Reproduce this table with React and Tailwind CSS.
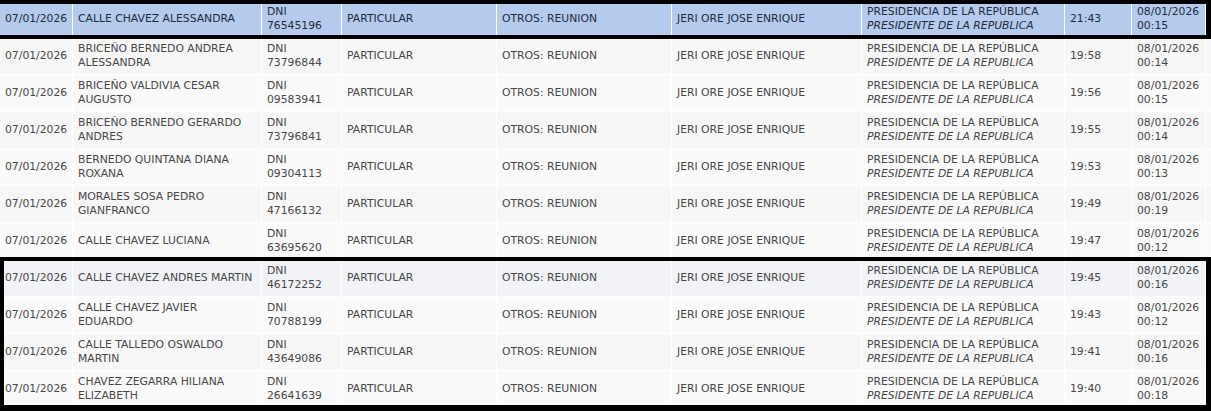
import React from "react";

const rows = [
  { name: ["CALLE CHAVEZ ALESSANDRA"], dni: "76545196", t: "21:43", out: "00:15" },
  { name: ["BRICEÑO BERNEDO ANDREA", "ALESSANDRA"], dni: "73796844", t: "19:58", out: "00:14" },
  { name: ["BRICEÑO VALDIVIA CESAR", "AUGUSTO"], dni: "09583941", t: "19:56", out: "00:15" },
  { name: ["BRICEÑO BERNEDO GERARDO", "ANDRES"], dni: "73796841", t: "19:55", out: "00:14" },
  { name: ["BERNEDO QUINTANA DIANA", "ROXANA"], dni: "09304113", t: "19:53", out: "00:13" },
  { name: ["MORALES SOSA PEDRO", "GIANFRANCO"], dni: "47166132", t: "19:49", out: "00:19" },
  { name: ["CALLE CHAVEZ LUCIANA"], dni: "63695620", t: "19:47", out: "00:12" },
  { name: ["CALLE CHAVEZ ANDRES MARTIN"], dni: "46172252", t: "19:45", out: "00:16" },
  { name: ["CALLE CHAVEZ JAVIER", "EDUARDO"], dni: "70788199", t: "19:43", out: "00:12" },
  { name: ["CALLE TALLEDO OSWALDO", "MARTIN"], dni: "43649086", t: "19:41", out: "00:16" },
  { name: ["CHAVEZ ZEGARRA HILIANA", "ELIZABETH"], dni: "26641639", t: "19:40", out: "00:18" },
];

function Cell({ children, className = "" }) {
  return (
    <div className={"flex flex-col justify-center border-r border-white pl-[5px] pr-[3px] overflow-hidden whitespace-nowrap " + className}>
      {children}
    </div>
  );
}

function Row({ r, bg, text }) {
  return (
    <div
      className={
        "grid grid-cols-[73px_189px_80px_155px_175px_190px_203px_67px_74px] h-[37px] border-b border-white " +
        bg +
        " " +
        text
      }
    >
      <Cell className="pl-[4px]">07/01/2026</Cell>
      <Cell>
        {r.name.map((l, i) => (
          <span key={i}>{l}</span>
        ))}
      </Cell>
      <Cell>
        <span>DNI</span>
        <span>{r.dni}</span>
      </Cell>
      <Cell>PARTICULAR</Cell>
      <Cell>OTROS: REUNION</Cell>
      <Cell>JERI ORE JOSE ENRIQUE</Cell>
      <Cell>
        <span>PRESIDENCIA DE LA REPÚBLICA</span>
        <span className="italic">PRESIDENTE DE LA REPUBLICA</span>
      </Cell>
      <Cell>{r.t}</Cell>
      <Cell>
        <span>08/01/2026</span>
        <span>{r.out}</span>
      </Cell>
    </div>
  );
}

export default function App() {
  const rowBg = (i) => (i === 7 ? "bg-[#f1f3f7]" : i % 2 === 1 ? "bg-[#f7f7f7]" : "bg-[#fafafa]");
  return (
    <div
      className="w-[1211px] h-[411px] overflow-hidden bg-white text-[10.8px] leading-[14px] pt-[1px]"
      style={{ fontFamily: '"DejaVu Sans", Verdana, sans-serif' }}
    >
      <div className="relative">
        <Row r={rows[0]} bg="bg-[#b4cbee]" text="text-[#1f2a3a]" />
        <div className="absolute top-[-1px] bottom-[-1px] left-[-4px] right-0 border-4 border-black border-r-[5px] pointer-events-none" />
      </div>
      {rows.slice(1, 7).map((r, i) => (
        <Row key={i} r={r} bg={rowBg(i + 1)} text="text-[#474747]" />
      ))}
      <div className="relative">
        {rows.slice(7).map((r, i) => (
          <Row key={i} r={r} bg={rowBg(i + 7)} text="text-[#474747]" />
        ))}
        <div className="absolute top-[-3px] bottom-[-3px] left-0 right-0 border-t-4 border-l-4 border-r-[5px] border-b-[6px] border-black pointer-events-none" />
      </div>
    </div>
  );
}
